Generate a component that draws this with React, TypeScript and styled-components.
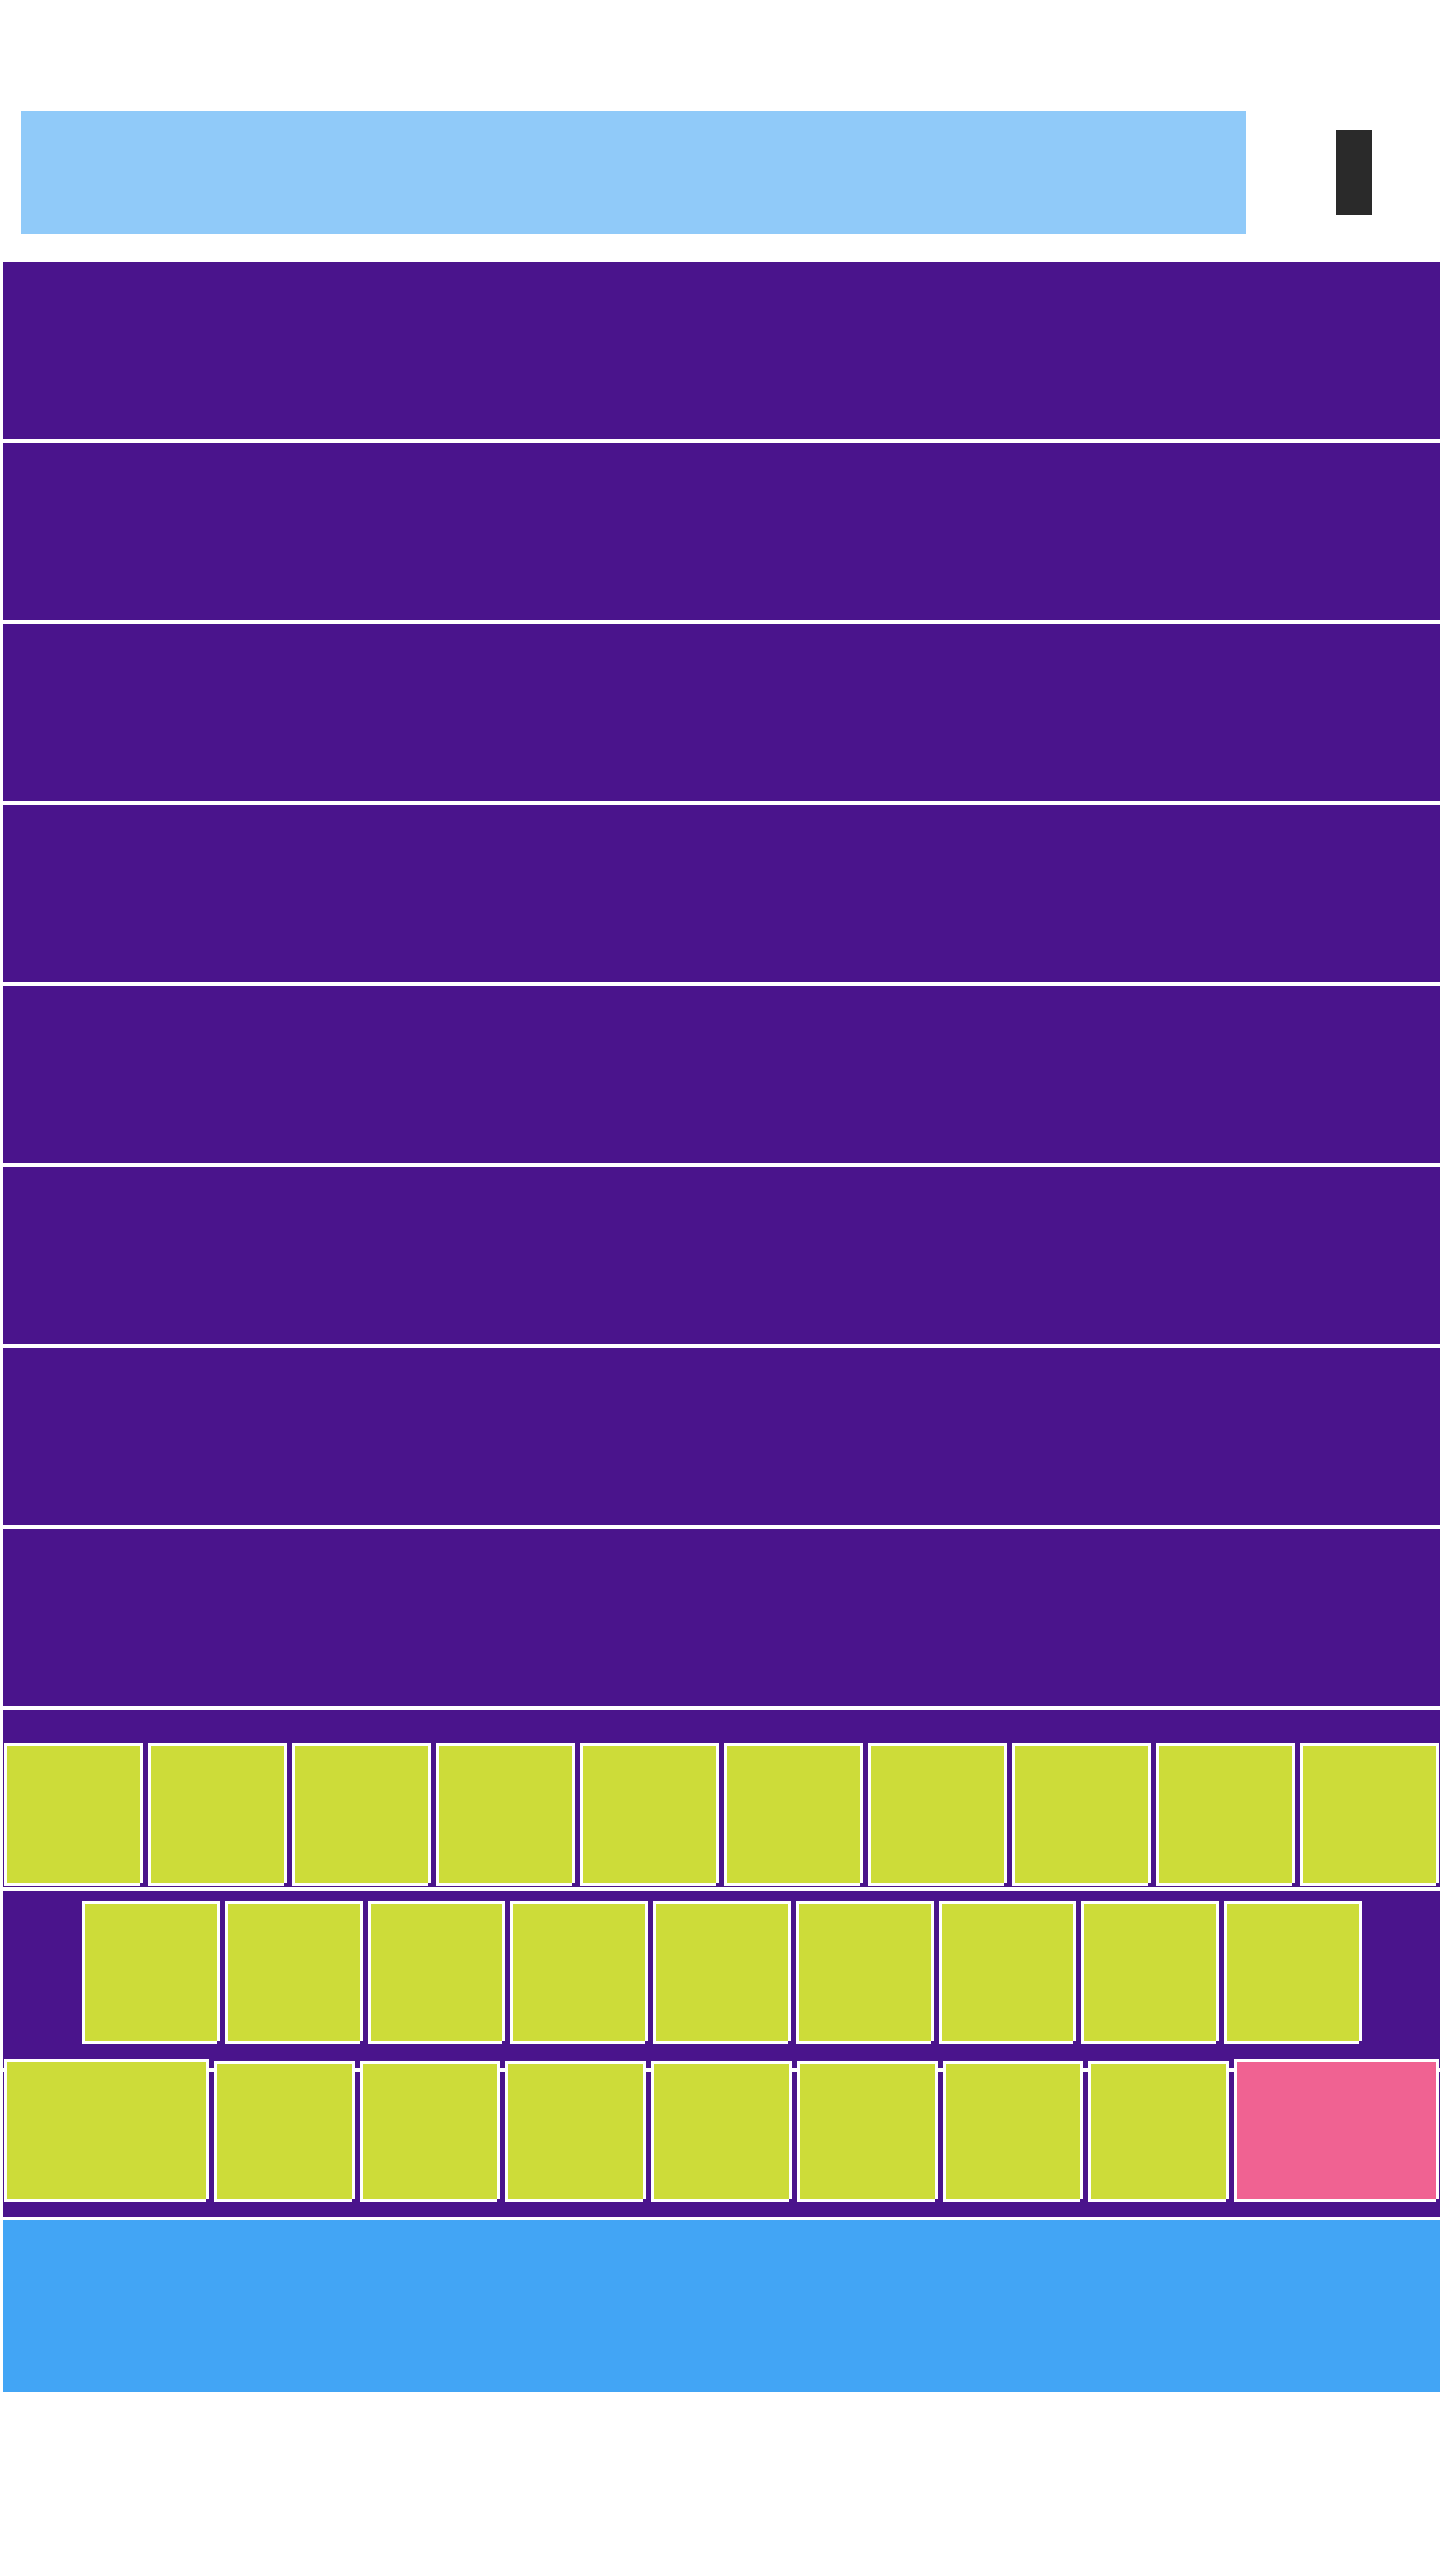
import styled, { createGlobalStyle } from 'styled-components';

const GlobalStyle = createGlobalStyle`
  html, body {
    margin: 0;
    padding: 0;
    background: #ffffff;
    font-family: 'Liberation Sans', Arial, sans-serif;
  }
`;

const PURPLE = '#4a148c';
const LIME = '#cddc39';
const PINK = '#f06292';

const Page = styled.div`
  min-height: 2560px;
  background: #ffffff;
`;

const TopBar = styled.header`
  display: flex;
  align-items: center;
  padding: 111px 0 28px 21px;
`;

const SearchBar = styled.div`
  width: 1225px;
  height: 123px;
  background: #90caf9;
`;

const MenuHandle = styled.div`
  width: 36px;
  height: 85px;
  margin-left: 90px;
  background: #2a2a2a;
`;

const Stack = styled.main`
  display: flex;
  flex-direction: column;
  gap: 4px;
  margin-left: 3px;
`;

const GuessRow = styled.div`
  height: 177px;
  background: ${PURPLE};
`;

const KeyRow = styled.div<{ $height: number; $pad: string }>`
  display: flex;
  align-items: flex-end;
  gap: 11px;
  box-sizing: border-box;
  height: ${({ $height }) => $height}px;
  padding: ${({ $pad }) => $pad};
  background: ${PURPLE};
`;

// white frame on every side except the bottom-right corner
const frame = [
  '-3px 0 0 #fff',
  '-3px 3px 0 #fff',
  '0 3px 0 #fff',
  '0 -3px 0 #fff',
  '-3px -3px 0 #fff',
  '3px -3px 0 #fff',
  '3px 0 0 #fff',
].join(', ');

const Key = styled.button<{ $tone?: 'lime' | 'pink'; $wide?: boolean; $h?: number }>`
  flex: ${({ $wide }) => ($wide ? '0 0 199px' : '1 1 0')};
  min-width: 0;
  height: ${({ $h }) => $h ?? 137}px;
  padding: 0;
  border: none;
  border-radius: 0;
  background: ${({ $tone }) => ($tone === 'pink' ? PINK : LIME)};
  box-shadow: ${frame};
  cursor: pointer;
`;

const Footer = styled.footer`
  height: 172px;
  margin: 3px 0 0 3px;
  background: #42a5f5;
`;

const rowOne = 'QWERTYUIOP'.split('');
const rowTwo = 'ASDFGHJKL'.split('');
const rowThree = 'ZXCVBNM'.split('');

export default function App() {
  return (
    <Page>
      <GlobalStyle />
      <TopBar>
        <SearchBar />
        <MenuHandle />
      </TopBar>
      <Stack>
        {Array.from({ length: 8 }).map((_, i) => (
          <GuessRow key={i} />
        ))}
        <KeyRow $height={177} $pad="0 4px 4px 4px">
          {rowOne.map((k) => (
            <Key key={k} aria-label={k} />
          ))}
        </KeyRow>
        <KeyRow $height={177} $pad="0 81px 27px 82px">
          {rowTwo.map((k) => (
            <Key key={k} aria-label={k} />
          ))}
        </KeyRow>
        <KeyRow $height={145} $pad="0 4px 18px 4px">
          <Key $wide aria-label="Enter" />
          {rowThree.map((k) => (
            <Key key={k} $h={135} aria-label={k} />
          ))}
          <Key $wide $tone="pink" aria-label="Backspace" />
        </KeyRow>
      </Stack>
      <Footer />
    </Page>
  );
}
